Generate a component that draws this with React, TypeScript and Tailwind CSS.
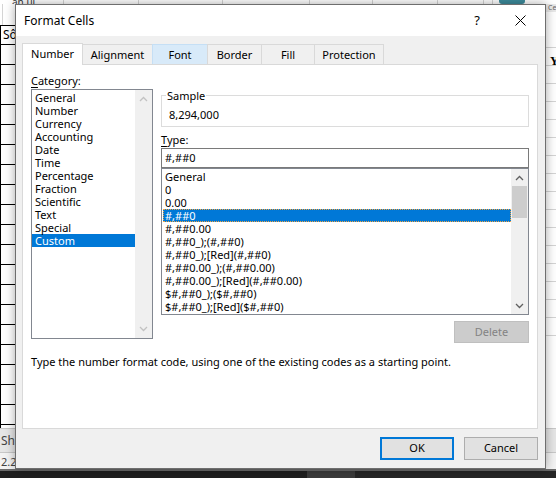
import React from "react"

const categories = [
  "General",
  "Number",
  "Currency",
  "Accounting",
  "Date",
  "Time",
  "Percentage",
  "Fraction",
  "Scientific",
  "Text",
  "Special",
  "Custom",
]

const types = [
  "General",
  "0",
  "0.00",
  "#,##0",
  "#,##0.00",
  "#,##0_);(#,##0)",
  "#,##0_);[Red](#,##0)",
  "#,##0.00_);(#,##0.00)",
  "#,##0.00_);[Red](#,##0.00)",
  "$#,##0_);($#,##0)",
  "$#,##0_);[Red]($#,##0)",
]

const tabs = [
  { label: "Number", w: "w-[61px]" },
  { label: "Alignment", w: "w-[71px]" },
  { label: "Font", w: "w-[56px]" },
  { label: "Border", w: "w-[55px]" },
  { label: "Fill", w: "w-[54px]" },
  { label: "Protection", w: "w-[70px]" },
]

function Chevron({ up, className }: { up?: boolean; className: string }) {
  return (
    <svg width="9" height="6" viewBox="0 0 9 6" className={className}>
      <path
        d={up ? "M1 5 L4.5 1.5 L8 5" : "M1 1 L4.5 4.5 L8 1"}
        fill="none"
        stroke="currentColor"
        strokeWidth="1.3"
      />
    </svg>
  )
}

function Sheet() {
  return (
    <div className="flex h-full flex-col">
      {/* top row peeking above the dialog */}
      <div className="flex h-[4px] shrink-0 overflow-hidden">
        <div className="w-[64px] border-r border-[#d4d4d4] pl-[12px] text-[10px] leading-[4px] text-[#333]">
          ân ui
        </div>
        <div className="w-[75px] border-r border-[#d4d4d4]" />
        <div className="w-[84px] border-r border-[#d4d4d4]" />
        <div className="w-[87px] border-r border-[#d4d4d4]" />
        <div className="w-[63px] border-r border-[#d4d4d4]" />
        <div className="w-[65px] border-r border-[#d4d4d4]" />
        <div className="w-[46px] border-r border-[#d4d4d4]" />
        <div className="w-[9px] border-r border-[#d4d4d4]" />
        <div className="ml-[6px] w-[26px] rounded-b-[3px] bg-[#3d8c9c]" />
      </div>
      <div className="flex flex-1">
        {/* left sliver of the table */}
        <div className="flex w-[15px] flex-col">
          <div className="ml-[2px] h-[21px] border-l border-[#d4d4d4]" />
          <div className="h-[20px] border-y border-l border-black pl-[2px] text-[12px] leading-[18px]">Sô</div>
          <div className="flex-1 border-l border-black bg-[repeating-linear-gradient(to_bottom,transparent_0,transparent_19px,#000_19px,#000_20px)]" />
        </div>
        <div className="flex-1" />
        {/* right sliver */}
        <div className="flex w-[11px] flex-col">
          <div className="h-[8px] overflow-hidden bg-[#e9e9e9] pl-[3px] text-[7px] leading-[8px] text-[#666]">Cel</div>
          <div className="h-[35px]" />
          <div className="h-[306px] bg-[repeating-linear-gradient(to_bottom,#d4d4d4_0,#d4d4d4_1px,transparent_1px,transparent_18px)] pl-[5px] pt-[6px] font-['Liberation_Serif',serif] text-[12px] font-bold leading-[16px]">
            Y
          </div>
          <div className="flex-1" />
        </div>
      </div>
      {/* sheet tabs */}
      <div className="h-[25px] shrink-0 border-y border-[#c8c8c8] bg-[#e6e6e6] pl-[1px] text-[12px] leading-[23px] text-[#444]">
        Sheet
      </div>
      {/* status bar */}
      <div className="flex h-[16px] shrink-0 items-center bg-[#f3f3f3] pl-[1px] pt-[3px] text-[11px] text-[#444]">
        <span>2.22</span>
        <div className="ml-[169px] h-full w-[38px] bg-[#dadada]" />
      </div>
      <div className="h-[2px] shrink-0 bg-[#6b6b6b]" />
      <div className="flex h-[7px] shrink-0">
        <div className="w-[307px] bg-[#1f1f1f]" />
        <div className="w-[48px] bg-[#3b3b3b]" />
        <div className="flex-1 bg-[#262626]" />
      </div>
    </div>
  )
}

function CategoryList() {
  return (
    <div className="flex h-[250px] w-[122px] border border-[#828790] bg-white">
      <div className="flex-1 pt-[1px]">
        {categories.map((c) => (
          <div
            key={c}
            className={
              c === "Custom"
                ? "h-[13px] bg-[#0078d7] pl-[3px] leading-[13px] text-white"
                : "h-[13px] pl-[3px] leading-[13px]"
            }
          >
            {c}
          </div>
        ))}
      </div>
      <div className="flex w-[17px] flex-col items-center justify-between bg-[#f0f0f0] py-[6px]">
        <Chevron up className="text-[#c2c2c2]" />
        <Chevron className="text-[#c2c2c2]" />
      </div>
    </div>
  )
}

function TypeList() {
  return (
    <div className="flex h-[147px] border border-[#828790] bg-white">
      <div className="flex-1 pt-[1px]">
        {types.map((t) => (
          <div
            key={t}
            className={
              t === "#,##0"
                ? "ml-[1px] h-[13px] border border-dotted border-[#f2a541] bg-[#0078d7] pl-[1px] leading-[11px] text-white"
                : "ml-[1px] h-[13px] pl-[2px] leading-[13px]"
            }
          >
            {t}
          </div>
        ))}
      </div>
      <div className="flex w-[17px] flex-col bg-[#f0f0f0]">
        <div className="flex h-[17px] items-center justify-center">
          <Chevron up className="text-[#606060]" />
        </div>
        <div className="mx-[1px] h-[32px] bg-[#cdcdcd]" />
        <div className="flex-1" />
        <div className="flex h-[17px] items-center justify-center">
          <Chevron className="text-[#606060]" />
        </div>
      </div>
    </div>
  )
}

function Dialog() {
  return (
    <div className="absolute left-[15px] top-[4px] flex h-[465px] w-[531px] flex-col border border-[#6e6e6e] bg-[#f0f0f0] shadow-[0_0_10px_rgba(0,0,0,0.35)]">
      {/* title bar */}
      <div className="flex h-[31px] shrink-0 items-center bg-white pl-[8px] text-[12px]">
        <span>Format Cells</span>
        <span className="ml-auto mr-[35px] text-[13px]">?</span>
        <svg width="11" height="11" viewBox="0 0 11 11" className="mr-[19px]">
          <path d="M0.5 0.5 L10.5 10.5 M10.5 0.5 L0.5 10.5" stroke="#000" strokeWidth="1" />
        </svg>
      </div>

      {/* tab strip */}
      <div className="mt-[7px] flex h-[21px] shrink-0 items-end pl-[6px]">
        {tabs.map((t, i) => (
          <div
            key={t.label}
            className={
              (i === 0
                ? "relative z-10 mb-[-1px] h-[22px] border border-b-0 border-[#d9d9d9] bg-white pb-[1px] "
                : t.label === "Font"
                  ? "-ml-px h-[20px] border border-b-0 border-[#c5dff5] bg-[#d8eaf9] pt-[1px] "
                  : "-ml-px h-[20px] border border-b-0 border-[#d9d9d9] bg-[#f0f0f0] pt-[1px] ") +
              t.w +
              " flex shrink-0 items-center justify-center"
            }
          >
            {t.label}
          </div>
        ))}
      </div>

      {/* tab panel */}
      <div className="ml-[6px] flex h-[365px] w-[516px] shrink-0 flex-col border border-[#d9d9d9] bg-white">
        <div className="flex">
          <div className="ml-[8px] pt-[8px]">
            <div className="h-[16px] leading-[16px]">
              <span className="underline underline-offset-2">C</span>ategory:
            </div>
            <CategoryList />
          </div>
          <div className="ml-[8px] flex w-[368px] flex-col pt-[30px]">
            <div className="relative h-[32px] border border-[#dcdcdc] pl-[7px] pt-[11px] leading-[16px]">
              <span className="absolute -top-[8px] left-[4px] bg-white px-[1px] leading-[16px]">Sample</span>
              8,294,000
            </div>
            <div className="mt-[5px] h-[16px] leading-[16px]">
              <span className="underline underline-offset-2">T</span>ype:
            </div>
            <div className="h-[20px] border border-[#7a7a7a] pl-[3px] leading-[18px]">#,##0</div>
            <TypeList />
            <div className="mt-[6px] flex h-[22px] w-[75px] items-center justify-center self-end border border-[#bfbfbf] bg-[#cccccc] text-[#838383]">
              Delete
            </div>
          </div>
        </div>
        <div className="mt-[11px] pl-[8px] leading-[16px]">
          Type the number format code, using one of the existing codes as a starting point.
        </div>
      </div>

      {/* footer */}
      <div className="flex justify-end gap-[10px] pr-[7px] pt-[8px]">
        <div className="flex h-[23px] w-[74px] items-center justify-center border-2 border-[#0078d7] bg-[#e1e1e1]">OK</div>
        <div className="flex h-[23px] w-[74px] items-center justify-center border border-[#adadad] bg-[#e1e1e1]">
          Cancel
        </div>
      </div>
    </div>
  )
}

export default function App() {
  return (
    <div className="relative h-[478px] w-[556px] overflow-hidden bg-white font-['Segoe_UI','Noto_Sans',sans-serif] text-[11px] text-black">
      <Sheet />
      <Dialog />
    </div>
  )
}
